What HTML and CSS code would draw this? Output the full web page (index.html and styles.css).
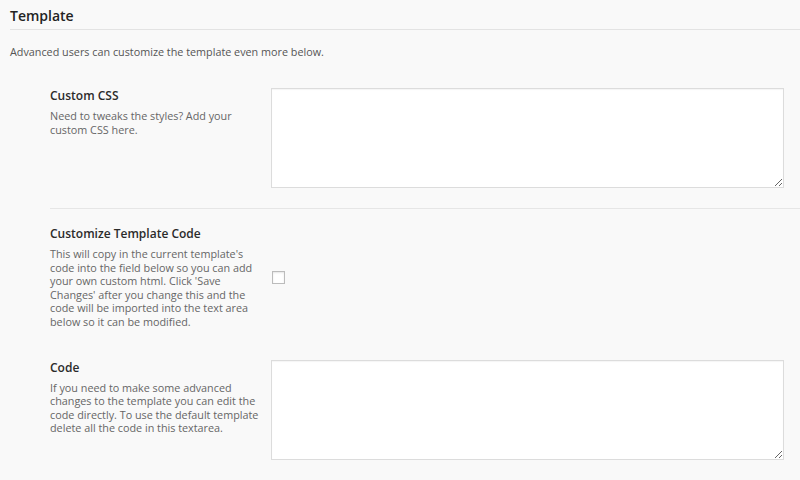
FILE: index.html
```html
<!DOCTYPE html>
<html lang="en">
<head>
    <meta charset="UTF-8">
    <meta name="viewport" content="width=device-width, initial-scale=1.0">
    <title>Template settings</title>
    <link rel="stylesheet" href="styles.css">
</head>
<body>
    <div class="settings">
        <h2 class="section-title">Template</h2>
        <p class="intro">Advanced users can customize the template even more below.</p>

        <div class="rows">
            <div class="row divided">
                <div class="row-label">
                    <h3>Custom CSS</h3>
                    <p>Need to tweaks the styles? Add your custom CSS here.</p>
                </div>
                <div class="row-field">
                    <textarea name="custom-css"></textarea>
                </div>
            </div>

            <div class="row centered">
                <div class="row-label">
                    <h3>Customize Template Code</h3>
                    <p>This will copy in the current template's code into the field below so you can add your own custom html. Click 'Save Changes' after you change this and the code will be imported into the text area below so it can be modified.</p>
                </div>
                <div class="row-field">
                    <input type="checkbox" name="customize-code">
                </div>
            </div>

            <div class="row last">
                <div class="row-label">
                    <h3>Code</h3>
                    <p>If you need to make some advanced changes to the template you can edit the code directly. To use the default template delete all the code in this textarea.</p>
                </div>
                <div class="row-field">
                    <textarea name="template-code"></textarea>
                </div>
            </div>
        </div>
    </div>
</body>
</html>
```

FILE: styles.css
```css
body {
    margin: 0;
    font-family: "Open Sans", "Liberation Sans", sans-serif;
    background-color: #f9f9f9;
    color: #444;
}

.settings {
    width: 800px;
}

/* Section header */
.section-title {
    margin: 0 0 0 10px;
    padding: 6px 0 3px;
    font-size: 14px;
    line-height: 20px;
    font-weight: 600;
    color: #232323;
    border-bottom: 1px solid #e3e3e3;
}

.intro {
    margin: 14px 10px 0;
    font-size: 10.8px;
    line-height: 16px;
    color: #555;
}

/* Rows */
.rows {
    margin-left: 50px;
}

.row {
    display: flex;
    align-items: flex-start;
}

.row.divided {
    padding: 28px 0 20px;
    border-bottom: 1px solid #e6e6e6;
}

.row.centered {
    align-items: center;
    padding: 17px 0 14px;
}

.row.last {
    padding: 17px 0 20px;
}

.row-label {
    width: 221px;
    flex-shrink: 0;
}

.row-label h3 {
    margin: 0;
    font-size: 12px;
    line-height: 16px;
    font-weight: 600;
    color: #2b2b2b;
}

.row-label p {
    margin: 5px 0 0;
    width: 215px;
    font-size: 10.8px;
    line-height: 13.6px;
    color: #666;
}

.row-field textarea {
    display: block;
    box-sizing: border-box;
    width: 513px;
    height: 100px;
    margin: 0;
    background: #fff;
    border: 1px solid #dcdcdc;
    box-shadow: inset 0 1px 1px rgba(0, 0, 0, 0.04);
}

.row-field input[type="checkbox"] {
    -webkit-appearance: none;
    appearance: none;
    display: block;
    width: 13px;
    height: 13px;
    margin: 0 0 0 1px;
    background: #fff;
    border: 1px solid #bcbcbc;
    box-shadow: inset 0 1px 2px rgba(0, 0, 0, 0.1);
}
```
